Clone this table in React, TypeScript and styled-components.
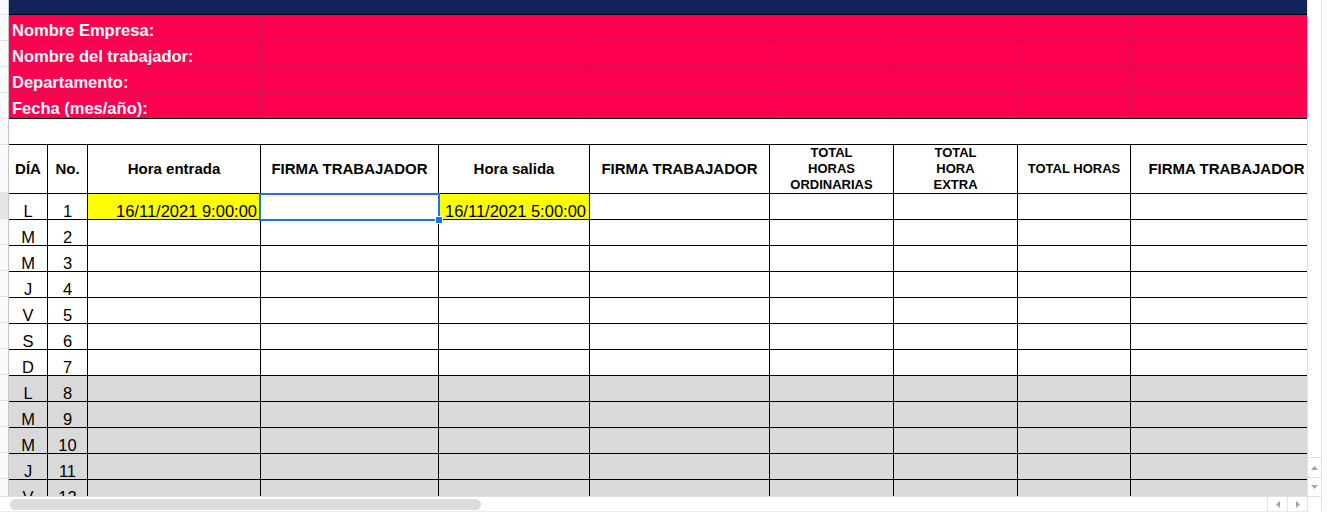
import React from "react";
import styled, { createGlobalStyle } from "styled-components";

const GlobalStyle = createGlobalStyle`
  html, body { margin: 0; padding: 0; background: #ffffff; }
  body { font-family: "Liberation Sans", Arial, sans-serif; }
  * { box-sizing: border-box; }
`;

const COLS = "39px 40px 173px 178px 151px 180px 124px 124px 113px 191px";
const PINK_LINE = "#dd0a4c";
const GRID = "#000000";
const SCROLL_LINE = "#e1e1e1";

const Screen = styled.div`
  width: 1331px;
  height: 512px;
  overflow: hidden;
  display: grid;
  grid-template-columns: 9px 1298px 15px 9px;
  grid-template-rows: 496px 16px;
  background: #ffffff;
`;

const RowStrip = styled.div`
  grid-column: 1;
  grid-row: 1;
  display: flex;
  flex-direction: column;
  background: #f8f9fa;
  border-right: 1px solid #c4c7c5;
  overflow: hidden;
`;

const StripCell = styled.div<{ $h: number; $active?: boolean }>`
  flex: 0 0 ${(p) => p.$h}px;
  border-bottom: 1px solid #e0e0e0;
  background: ${(p) => (p.$active ? "#e3e5e8" : "transparent")};
`;

const Sheet = styled.div`
  grid-column: 2;
  grid-row: 1;
  overflow: hidden;
  display: flex;
  flex-direction: column;
`;

const TitleBar = styled.div`
  flex: 0 0 15px;
  width: 1313px;
  background: #13245b;
  border-bottom: 1px solid #000;
`;

const InfoBlock = styled.div`
  display: grid;
  grid-template-columns: ${COLS};
  grid-auto-rows: 26px;
  width: 1313px;
  background: #ff0050;
  flex: 0 0 auto;
`;

const InfoCell = styled.div<{ $span: number; $last?: boolean }>`
  grid-column: span ${(p) => p.$span};
  border-right: 1px solid ${PINK_LINE};
  border-bottom: 1px solid ${(p) => (p.$last ? "#000" : PINK_LINE)};
  display: flex;
  align-items: flex-end;
  padding: 0 0 1px 3px;
  color: #ffffff;
  font-weight: 700;
  font-size: 16.5px;
  line-height: 17px;
  white-space: nowrap;
`;

const Spacer = styled.div`
  flex: 0 0 26px;
  width: 1313px;
  border-bottom: 1px solid ${GRID};
`;

const Row = styled.div<{ $h: number; $shade?: boolean }>`
  flex: 0 0 ${(p) => p.$h}px;
  display: grid;
  grid-template-columns: ${COLS};
  width: 1313px;
  border-bottom: 1px solid ${GRID};
  background: ${(p) => (p.$shade ? "#d9d9d9" : "#ffffff")};
`;

const HeadCell = styled.div<{ $small?: boolean }>`
  border-right: 1px solid ${GRID};
  display: flex;
  align-items: center;
  justify-content: center;
  text-align: center;
  font-weight: 700;
  font-size: ${(p) => (p.$small ? 13 : 15)}px;
  line-height: ${(p) => (p.$small ? 16 : 18)}px;
  color: #000;
  white-space: pre-line;
  &:last-child { border-right: none; }
`;

const DataCell = styled.div<{ $align?: "center" | "right"; $fill?: boolean }>`
  position: relative;
  border-right: 1px solid ${GRID};
  display: flex;
  align-items: flex-end;
  justify-content: ${(p) => (p.$align === "right" ? "flex-end" : "center")};
  padding: 0 ${(p) => (p.$align === "right" ? 3 : 0)}px 0 0;
  background: ${(p) => (p.$fill ? "#ffff00" : "transparent")};
  font-size: 16.5px;
  line-height: 16px;
  color: #000;
  white-space: nowrap;
  &:last-child { border-right: none; }
`;

const Selection = styled.div`
  position: absolute;
  top: -1px;
  left: -2px;
  right: -2px;
  bottom: -2px;
  border: 2px solid #1a73e8;
  pointer-events: none;
  z-index: 2;
`;

const Handle = styled.div`
  position: absolute;
  right: -5px;
  bottom: -5px;
  width: 8px;
  height: 8px;
  background: #1a73e8;
  border: 1px solid #ffffff;
`;

const VScroll = styled.div`
  grid-column: 3;
  grid-row: 1;
  border-left: 1px solid ${SCROLL_LINE};
  border-right: 1px solid ${SCROLL_LINE};
  display: flex;
  flex-direction: column;
  justify-content: flex-end;
`;

const ArrowBox = styled.div<{ $h?: number }>`
  height: ${(p) => p.$h ?? 20}px;
  border-top: 1px solid ${SCROLL_LINE};
  display: flex;
  align-items: center;
  justify-content: center;
`;

const HScroll = styled.div`
  grid-column: 1 / 3;
  grid-row: 2;
  display: flex;
  align-items: center;
  border-top: 1px solid ${SCROLL_LINE};
  border-bottom: 1px solid #ebebeb;
`;

const Thumb = styled.div`
  margin-left: 10px;
  width: 471px;
  height: 11px;
  border-radius: 6px;
  background: #dadce0;
`;

const HFill = styled.div`
  flex: 1;
`;

const HArrow = styled.div`
  width: 20px;
  height: 100%;
  border-left: 1px solid ${SCROLL_LINE};
  display: flex;
  align-items: center;
  justify-content: center;
`;

const Corner = styled.div`
  grid-column: 3;
  grid-row: 2;
  border: 1px solid ${SCROLL_LINE};
  border-bottom: none;
`;

type Dir = "up" | "down" | "left" | "right";
const Tri = ({ dir }: { dir: Dir }) => {
  const pts: Record<Dir, string> = {
    up: "0,4 7,4 3.5,0",
    down: "0,0 7,0 3.5,4",
    left: "4,0 4,7 0,3.5",
    right: "0,0 0,7 4,3.5",
  };
  const vertical = dir === "up" || dir === "down";
  return (
    <svg width={vertical ? 7 : 4} height={vertical ? 4 : 7} viewBox={vertical ? "0 0 7 4" : "0 0 4 7"}>
      <polygon points={pts[dir]} fill="#a3a3a3" />
    </svg>
  );
};

const infoLabels = ["Nombre Empresa:", "Nombre del trabajador:", "Departamento:", "Fecha (mes/año):"];
const infoSpans = [3, 2, 1, 1, 1, 1, 1];

const headers: { text: string; small?: boolean }[] = [
  { text: "DÍA" },
  { text: "No." },
  { text: "Hora entrada" },
  { text: "FIRMA TRABAJADOR" },
  { text: "Hora salida" },
  { text: "FIRMA TRABAJADOR" },
  { text: "TOTAL\nHORAS\nORDINARIAS", small: true },
  { text: "TOTAL\nHORA\nEXTRA", small: true },
  { text: "TOTAL HORAS", small: true },
  { text: "FIRMA TRABAJADOR" },
];

const days = ["L", "M", "M", "J", "V", "S", "D", "L", "M", "M", "J", "V"];

export default function App() {
  const stripHeights = [15, 26, 26, 26, 26, 26, 48, ...days.map(() => 26)];
  return (
    <>
      <GlobalStyle />
      <Screen>
        <RowStrip>
          {stripHeights.map((h, i) => (
            <StripCell key={i} $h={h} $active={i === 7} />
          ))}
        </RowStrip>
        <Sheet>
          <TitleBar />
          <InfoBlock>
            {infoLabels.map((label, r) =>
              infoSpans.map((span, c) => (
                <InfoCell key={`${r}-${c}`} $span={span} $last={r === infoLabels.length - 1}>
                  {c === 0 ? label : null}
                </InfoCell>
              ))
            )}
          </InfoBlock>
          <Spacer />
          <Row $h={48}>
            {headers.map((h, i) => (
              <HeadCell key={i} $small={h.small}>
                {h.text}
              </HeadCell>
            ))}
          </Row>
          {days.map((d, i) => (
            <Row key={i} $h={26} $shade={i >= 7}>
              <DataCell>{d}</DataCell>
              <DataCell>{i + 1}</DataCell>
              <DataCell $align="right" $fill={i === 0}>
                {i === 0 ? "16/11/2021 9:00:00" : null}
              </DataCell>
              <DataCell>
                {i === 0 ? (
                  <Selection>
                    <Handle />
                  </Selection>
                ) : null}
              </DataCell>
              <DataCell $align="right" $fill={i === 0}>
                {i === 0 ? "16/11/2021 5:00:00" : null}
              </DataCell>
              <DataCell />
              <DataCell />
              <DataCell />
              <DataCell />
              <DataCell />
            </Row>
          ))}
        </Sheet>
        <VScroll>
          <ArrowBox>
            <Tri dir="up" />
          </ArrowBox>
          <ArrowBox $h={19}>
            <Tri dir="down" />
          </ArrowBox>
        </VScroll>
        <HScroll>
          <Thumb />
          <HFill />
          <HArrow>
            <Tri dir="left" />
          </HArrow>
          <HArrow>
            <Tri dir="right" />
          </HArrow>
        </HScroll>
        <Corner />
      </Screen>
    </>
  );
}
